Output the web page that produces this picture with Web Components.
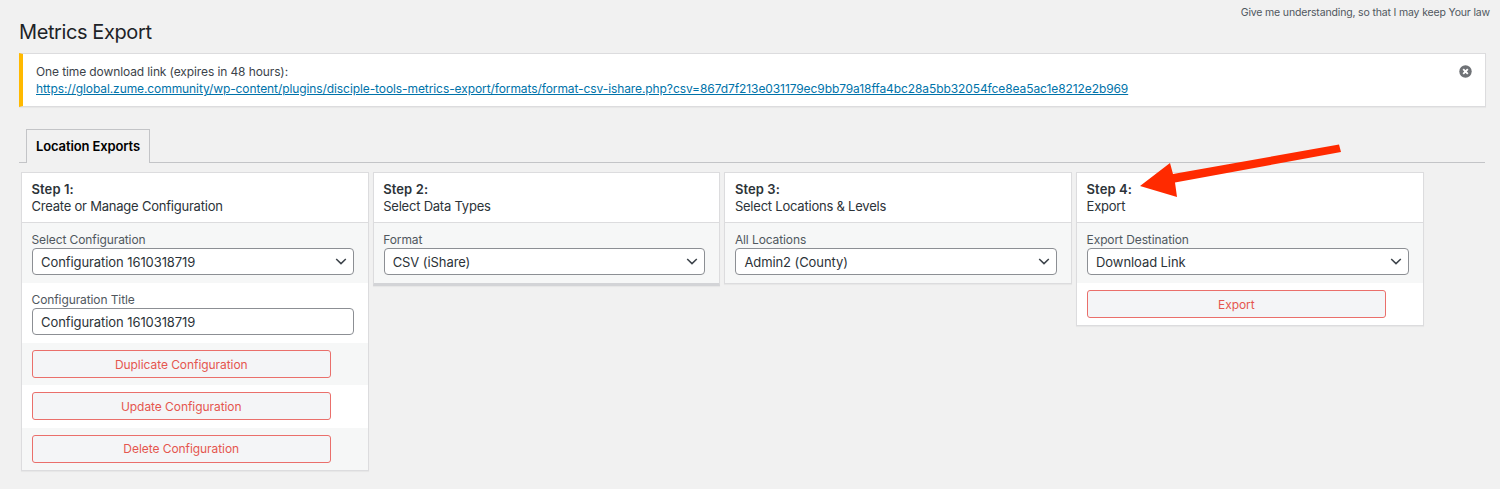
<!DOCTYPE html>
<html>
<head>
<meta charset="utf-8">
<title>Metrics Export</title>
<style>
  html, body { margin: 0; padding: 0; background: #f1f1f1; }
  body { font-family: Inter, "Liberation Sans", sans-serif; color: #3c434a; font-size: 13px; height: 489px; overflow: hidden; }
</style>
</head>
<body>
<admin-page>
  <top-quote slot="quote">Give me understanding, so that I may keep Your law</top-quote>
  <page-title slot="title">Metrics Export</page-title>
  <wp-notice slot="notice" href="#">One time download link (expires in 48 hours):</wp-notice>
  <nav-tabs slot="tabs"><nav-tab>Location Exports</nav-tab></nav-tabs>

  <step-card step="Step 1:" heading="Create or Manage Configuration">
    <card-row shade label="Select Configuration"><fake-select>Configuration 1610318719</fake-select></card-row>
    <card-row label="Configuration Title"><text-box>Configuration 1610318719</text-box></card-row>
    <card-row shade slim><red-button>Duplicate Configuration</red-button></card-row>
    <card-row slim><red-button>Update Configuration</red-button></card-row>
    <card-row shade slim><red-button>Delete Configuration</red-button></card-row>
  </step-card>

  <step-card step="Step 2:" heading="Select Data Types" class="thick">
    <card-row shade label="Format"><fake-select>CSV (iShare)</fake-select></card-row>
  </step-card>

  <step-card step="Step 3:" heading="Select Locations &amp; Levels">
    <card-row shade label="All Locations"><fake-select>Admin2 (County)</fake-select></card-row>
  </step-card>

  <step-card step="Step 4:" heading="Export">
    <card-row shade label="Export Destination"><fake-select>Download Link</fake-select></card-row>
    <card-row slim><red-button>Export</red-button></card-row>
  </step-card>

  <red-arrow slot="overlay"></red-arrow>
</admin-page>

<script>
function define(name, css, html) {
  customElements.define(name, class extends HTMLElement {
    connectedCallback() {
      if (this.shadowRoot) return;
      this.attachShadow({ mode: 'open' });
      const body = typeof html === 'function' ? html(this) : html;
      this.shadowRoot.innerHTML = `<style>${css}</style>${body}`;
    }
  });
}

define('admin-page', `
  :host { display: block; position: relative; height: 489px; box-sizing: border-box; padding: 0 15px 0 19px; }
  .cards { display: grid; grid-template-columns: repeat(4, 347.7px); column-gap: 4px; align-items: start; margin: 9px 0 0 2px; }
`, `
  <slot name="quote"></slot>
  <slot name="title"></slot>
  <slot name="notice"></slot>
  <slot name="tabs"></slot>
  <div class="cards"><slot></slot></div>
  <slot name="overlay"></slot>
`);

define('top-quote', `
  :host { display: block; height: 21px; margin-right: -5px; padding-top: 5px; box-sizing: border-box; text-align: right; font-size: 10.5px; line-height: 15px; color: #50575e; letter-spacing: -.16px; }
`, `<slot></slot>`);

define('page-title', `
  :host { display: block; height: 32px; font-size: 20px; line-height: 22px; color: #1d2327; letter-spacing: -.4px; }
`, `<slot></slot>`);

define('wp-notice', `
  :host { display: flex; justify-content: space-between; box-sizing: border-box; height: 54px; margin-right: -1px; background: #fff; border: 1px solid #dcdcde; border-left: 4px solid #ffb900; padding: 9px 12px 0 13px; font-size: 12px; line-height: 17px; letter-spacing: -.11px; color: #3c434a; box-shadow: 0 1px 1px rgba(0,0,0,.04); }
  a { color: #0073aa; text-decoration: underline; display: block; letter-spacing: -.09px; }
  svg { width: 13px; height: 13px; margin: 2px 1px 0 0; flex: none; }
`, () => `
  <div><slot></slot><a href="#">https://global.zume.community/wp-content/plugins/disciple-tools-metrics-export/formats/format-csv-ishare.php?csv=867d7f213e031179ec9bb79a18ffa4bc28a5bb32054fce8ea5ac1e8212e2b969</a></div>
  <svg viewBox="0 0 13 13"><circle cx="6.5" cy="6.5" r="6.2" fill="#6f7276"/><path d="M4.2 4.2l4.6 4.6M8.8 4.2l-4.6 4.6" stroke="#fff" stroke-width="1.9"/></svg>
`);

define('nav-tabs', `
  :host { display: flex; margin-top: 22px; padding-left: 7px; height: 33px; border-bottom: 1px solid #c3c4c7; }
`, `<slot></slot>`);

define('nav-tab', `
  :host { display: block; box-sizing: border-box; height: 34px; padding: 7px 9px 0; background: #f1f1f1; border: 1px solid #c3c4c7; border-bottom: 0; font-size: 13px; line-height: 18px; font-weight: 600; letter-spacing: -.12px; color: #000; }
`, `<slot></slot>`);

define('step-card', `
  :host { display: block; background: #fff; border: 1px solid #dcdcde; box-shadow: 0 1px 1px rgba(0,0,0,.04); }
  :host(.thick) { border-bottom: 3px solid #d3d4d7; }
  header { box-sizing: border-box; height: 50px; padding: 7.5px 9.5px 0; border-bottom: 1px solid #dcdcde; font-size: 13px; line-height: 17.5px; letter-spacing: -.22px; color: #2c3338; }
  b { display: block; font-weight: 600; letter-spacing: .1px; }
`, el => `<header><b>${el.getAttribute('step')}</b>${el.getAttribute('heading').replace('&', '&amp;')}</header><slot></slot>`);

define('card-row', `
  :host { display: block; box-sizing: border-box; height: 60px; padding: 9px 14px 0 9.5px; background: #fff; }
  :host([shade]) { background: #f6f7f7; }
  :host([slim]) { height: 42.3px; padding: 7px 0 0 9.5px; }
  label { display: block; font-size: 12px; line-height: 15px; letter-spacing: -.1px; color: #50575e; }
`, el => `${el.hasAttribute('label') ? `<label>${el.getAttribute('label')}</label>` : ''}<slot></slot>`);

const fieldCss = `
  :host { display: flex; align-items: center; justify-content: space-between; box-sizing: border-box; height: 27px; margin: 1px 0 0 .5px; padding: 0 6px 0 8px; background: #fff; border: 1px solid #8c8f94; border-radius: 4px; font-size: 13px; letter-spacing: -.08px; color: #2c3338; white-space: nowrap; }
  svg { width: 12px; height: 7px; flex: none; }
`;
define('fake-select', fieldCss, `<span><slot></slot></span><svg viewBox="0 0 12 7"><path d="M1.2 1l4.8 4.6L10.8 1" fill="none" stroke="#3c434a" stroke-width="1.5"/></svg>`);
define('text-box', fieldCss, `<span><slot></slot></span>`);

define('red-button', `
  :host { display: flex; align-items: center; justify-content: center; box-sizing: border-box; width: 299.5px; height: 28px; background: #f4f5f7; border: 1px solid #ea6f6b; border-radius: 3px; font-size: 12px; letter-spacing: -.06px; color: #e5564f; }
`, `<slot></slot>`);

define('red-arrow', `
  :host { position: absolute; left: 0; top: 0; width: 1500px; height: 489px; pointer-events: none; }
  svg { display: block; }
`, `<svg width="1500" height="489" viewBox="0 0 1500 489"><path d="M1339 144.500L1341 152L1175 182.500L1177 197L1140 186L1170 163L1173 174Z" fill="#ff2a00"/></svg>`);
</script>
</body>
</html>
